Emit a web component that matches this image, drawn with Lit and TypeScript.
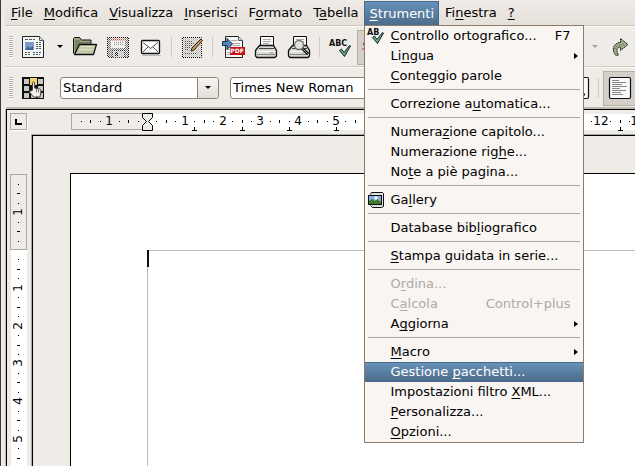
import { LitElement, html, svg, css, nothing, TemplateResult } from "lit";
import { customElement, property, state } from "lit/decorators.js";
import { classMap } from "lit/directives/class-map.js";

/* Icons, all on a 24 x 24 grid */
const page = (fill = "#f4f5f3") => svg`
  <path d="M1.500 1.500h17l4 4v17h-21z" fill="${fill}" stroke="#222"/>
  <path d="M18.500 1.500v4h4" fill="#ddd" stroke="#555"/>`;

const printer = svg`
  <path d="M6.500 11.500V1.500h13v10" fill="#fafafa" stroke="#111"/>
  <path d="M9 4.500h8M9 6.500h8M9 8.500h6" stroke="#aaa"/>
  <path d="M5.500 10.500h14l3 5v5.500l-1.500 1.500H3L1.500 21v-5.500z" fill="#d8d8d4" stroke="#111" stroke-width="1.300"/>
  <path d="M5 13.500h15" stroke="#444"/>
  <path d="M3 16.500h18" stroke="#fff"/>
  <path d="M3 19.500h18" stroke="#888"/>
  <rect x="16" y="17" width="3" height="1" fill="#6a8"/>`;

const check = (x: number, y: number) => svg`
  <path transform="translate(${x} ${y})" d="M.5 5.500l2-1.500 2.500 3.500L10.500.5l1 .5L5.500 11.500z" fill="#6fae76" stroke="#123" stroke-linejoin="round"/>`;

const icons: Record<string, TemplateResult> = {
  newdoc: svg`${page("#f3f6f8")}
    <path d="M4 4.500h10" stroke="#555" stroke-dasharray="3 1"/>
    <rect x="4" y="7" width="9" height="8" fill="#7d9ac4"/><path d="M4 15l3-4 2 2 3-2v4z" fill="#42659b"/>
    <path d="M15 7.500h5M15 9.500h5M15 11.500h5M15 13.500h5M4 17.500h6M12 17.500h8M4 19.500h6M12 19.500h7" stroke="#555" stroke-dasharray="2 1"/>`,
  open: svg`<g transform="translate(-2 -1)">
    <path d="M2.500 19.500v-15l1-1h5l2 2.500h9.500v5" fill="#9aa382" stroke="#111"/>
    <path d="M4 18V6h4l2 2h9v3" fill="#79815f"/>
    <path d="M3.500 20.500l5-10H25.500l-3 10z" fill="#c3caa8" stroke="#111" stroke-width="1.300" stroke-linejoin="round"/>
    <path d="M9.500 12.500h14M8 15.500h14" stroke="#dfe4cb"/></g>`,
  save: svg`
    <path d="M1.500 2.500h21v20h-19l-2-2z" fill="#6f7478" stroke="#000"/>
    <rect x="5" y="3" width="14" height="10" fill="#f6f6f6"/><path d="M5 4.500h14" stroke="#c8503f" stroke-width="2"/>
    <path d="M7 7.500h10M7 9.500h10" stroke="#999"/>
    <rect x="6.500" y="15.500" width="12" height="7" fill="#b9bec0" stroke="#333"/><rect x="9" y="17" width="3" height="4" fill="#111"/>
    <rect x="1" y="2" width="22" height="21" fill="url(#dither)"/>`,
  mail: svg`
    <rect x="2.500" y="5.500" width="18" height="13" rx="1" fill="#fafafa" stroke="#111" stroke-width="1.300"/>
    <path d="M4 7.500l7.500 6 7.500-6M4 17l5-5M19 17l-5-5" fill="none" stroke="#555"/><path d="M3 20.500h19" stroke="#bbb"/>`,
  edit: svg`
    <path d="M2.500 2.500h19v20h-19z" fill="#bdbdb9" stroke="#000"/>
    <path d="M5 6.500h8M5 8.500h9M5 10.500h7M5 12.500h6M5 14.500h4M5 18.500h12" stroke="#444"/>
    <rect x="2" y="2" width="20" height="21" fill="url(#dither)"/>
    <path d="M11 16l1-3 9-9 1.500 1.500L14 15z" fill="#d09a55" stroke="#222"/>`,
  pdf: svg`
    <path d="M4.500 1.500h13l4 4v17h-17z" fill="#f6f6f6" stroke="#222"/><path d="M17.500 1.500v4h4" fill="#ddd" stroke="#555"/>
    <path d="M10 5.500h6M12 8.500h7M12 10.500h7M6 14.500h3M6 17.500h3M6 19.500h3" stroke="#aaa"/>
    <path d="M1.500 6.500H6V3.500L11.500 9 6 14.500v-4H1.500z" fill="#5486b5" stroke="#10304c"/>
    <rect x="9" y="12" width="15" height="8" fill="#c2141a"/>
    <text x="16" y="18" class="pdf">PDF</text>`,
  print: svg`${printer}`,
  preview: svg`${printer}
    <path d="M15 13l6 6" stroke="#111" stroke-width="3"/><path d="M15 13l5.500 5.500" stroke="#9aa58a"/>
    <circle cx="12" cy="10" r="4.500" fill="#dfe3df" stroke="#777" stroke-width="1.500"/>`,
  spell: svg`<text x="1" y="11" class="abc">ABC</text>${check(11, 10)}`,
  autospell: svg`<text x="1" y="10" class="abc">ABC</text>
    <path d="M0 14.500l2-1 2 1 2-1 2 1 2-1 2 1 2-1 2 1 2-1" fill="none" stroke="#e02010"/>`,
  redo: svg`
    <path d="M8 20.500C3 15 5.500 7.500 12.500 7.500V3.500L20 9.500l-7.500 6V12C9 12 7.500 15 10.500 20z" fill="#a0ab87" stroke="#111" stroke-dasharray="1.500 .7"/>
    <path d="M7 14c1-3 3-4 6-4.500h3" fill="none" stroke="#66734d" stroke-dasharray="1 1"/>`,
  styles: svg`
    <rect x="1" y="1" width="22" height="22" fill="#111"/>
    <path d="M3 3h5v5H3zM17 3h5v5h-5zM3 10h5v5H3zM17 10h5v5h-5zM3 17h5v5H3zM10 17h5v5h-5zM17 17h5v5h-5z" fill="#c9c9c4"/>
    <rect x="9" y="2" width="7" height="7" fill="#f3d36c"/>
    <path d="M11.500 14V6.500q1-1.500 2 0V12l5 1q1.500.5 1.500 2l-1 6h-6.500l-4-5q0-2 2-1z" fill="#f1eee4" stroke="#444"/>
    <path d="M15.500 13v3M17.500 13.500v3" stroke="#777"/>`,
  alignleft: svg`
    <rect x="1.500" y="1.500" width="21" height="21" rx="1.500" fill="#fafafa" stroke="#111" stroke-width="1.200"/>
    <path d="M4 4.500h7M4 6.500h14M4 8.500h10M4 10.500h15M4 12.500h8M4 14.500h14M4 16.500h9M4 18.500h11" stroke="#888"/>`,
  frame: svg`
    <rect x="1.500" y="1.500" width="21" height="21" rx="1.500" fill="#fafafa" stroke="#111" stroke-width="1.200"/><path d="M14 18.500h5" stroke="#111" stroke-width="2"/>`,
  gallery: svg`
    <path d="M5.500 6.500l1-2h11l1 1v13l-2 1h-9l-2-2" fill="#ddd" stroke="#111"/>
    <rect x="3.500" y="7.500" width="13" height="9" fill="#86aede" stroke="#111"/>
    <path d="M4 13l3-2 3 2 2-2 4 3v2H4z" fill="#3f7a2d"/><path d="M11 8l2 2-2 2-2-2z" fill="#fff"/>`,
  spellmenu: svg`<text x="2" y="11" class="abc">AB</text>${check(7, 8)}`,
};

const icon = (name: string) => html`<svg class="icon" viewBox="0 0 24 24" aria-hidden="true">
  <defs><pattern id="dither" width="2" height="2" patternUnits="userSpaceOnUse">
    <rect width="1" height="1" fill="#efebe7"/><rect x="1" y="1" width="1" height="1" fill="#efebe7"/>
  </pattern></defs>${icons[name]}</svg>`;

/* "_" marks the mnemonic: the letter after it is underlined */
const mnemonic = (s: string) => {
  const i = s.indexOf("_");
  return i < 0 ? html`${s}` : html`${s.slice(0, i)}<u>${s[i + 1]}</u>${s.slice(i + 2)}`;
};

const shared = css`
  * { box-sizing: border-box; }
  button, select { font: inherit; color: inherit; border: 0; margin: 0; padding: 0; background: none; }
  u { text-decoration-thickness: 1px; text-underline-offset: 2px; text-decoration-skip-ink: none; }
  .icon { display: block; width: 24px; height: 24px; flex: none; }
  .abc { font: bold 8px "DejaVu Sans", sans-serif; fill: #111; }
  .pdf { font: bold 6px "DejaVu Sans", sans-serif; fill: #fff; text-anchor: middle; }
`;

type Entry = { label: string; key?: string; icon?: string; sub?: boolean; disabled?: boolean; active?: boolean } | null;

const tools: Entry[] = [
  { label: "_Controllo ortografico...", key: "F7", icon: "spellmenu" },
  { label: "Li_ngua", sub: true },
  { label: "_Conteggio parole" },
  null,
  { label: "Correzione a_utomatica..." },
  null,
  { label: "Numera_zione capitolo..." },
  { label: "Numerazione rig_he..." },
  { label: "No_te a piè pagina..." },
  null,
  { label: "Ga_llery", icon: "gallery" },
  null,
  { label: "Database bib_liografico" },
  null,
  { label: "_Stampa guidata in serie..." },
  null,
  { label: "O_rdina...", disabled: true },
  { label: "C_alcola", key: "Control+plus", disabled: true },
  { label: "A_ggiorna", sub: true },
  null,
  { label: "_Macro", sub: true },
  { label: "Gestione _pacchetti...", active: true },
  { label: "Impostazioni filtro _XML..." },
  { label: "_Personalizza..." },
  { label: "_Opzioni..." },
];

@customElement("drop-menu")
export class DropMenu extends LitElement {
  @property({ attribute: false }) entries: Entry[] = [];
  static styles = [shared, css`
    :host { display: block; width: 220px; background: #f8f5f2; border: 1px solid #8f7b6b; color: #000; }
    .entry { display: flex; align-items: center; width: 100%; height: 20px; padding-right: 12px; text-align: left; white-space: nowrap; }
    .slot { width: 26px; flex: none; }
    .label { flex: 1; }
    .entry:disabled { color: #aeaaa6; }
    .active { color: #fff; background: linear-gradient(#6791b8, #4c6c8c); border: 1px solid #456a90; border-width: 1px 0; }
    .rule { height: 8px; margin: 0 3px; border: 0; background: linear-gradient(#aaa6a2, #aaa6a2) 0 3px / 100% 1px no-repeat; }
    .arrow { width: 4px; height: 6px; margin-right: -7px; }
  `];
  render() {
    return this.entries.map((e) => e === null ? html`<hr class="rule">` : html`
      <button role="menuitem" class=${classMap({ entry: true, active: !!e.active })} ?disabled=${e.disabled}>
        <span class="slot">${e.icon ? icon(e.icon) : nothing}</span>
        <span class="label">${mnemonic(e.label)}</span>
        ${e.key ? html`<span>${e.key}</span>` : nothing}
        ${e.sub ? html`<svg class="arrow" viewBox="0 0 4 6" aria-hidden="true"><path d="M0 0l4 3-4 3z"/></svg>` : nothing}
      </button>`);
  }
}

const CM = 37.8;
const ORIGIN = 116;

@customElement("ruler-strip")
export class RulerStrip extends LitElement {
  @property({ type: Boolean, reflect: true }) vertical = false;
  @state() private extent = 0;
  private observer = new ResizeObserver(([e]) => {
    this.extent = this.vertical ? e.contentRect.height : e.contentRect.width;
  });
  static styles = css`
    :host { display: block; overflow: hidden; min-width: 0; min-height: 0; }
    svg { display: block; width: 100%; height: 24px; }
    :host([vertical]) svg { width: 24px; height: 100%; }
    text { font: 12px "DejaVu Sans", sans-serif; text-anchor: middle; fill: #000; }
  `;
  connectedCallback() {
    super.connectedCallback();
    this.observer.observe(this);
  }
  disconnectedCallback() {
    super.disconnectedCallback();
    this.observer.disconnect();
  }
  render() {
    const v = this.vertical;
    const end = this.extent + 6;
    const white = Math.max(0, this.extent - ORIGIN);
    const marks: unknown[] = [];
    const box = (a: number, h: number) => v
      ? svg`<rect x=${11 - Math.floor(h / 2)} y=${a} width=${h} height="1"/>`
      : svg`<rect x=${a} y=${11 - Math.floor(h / 2)} width="1" height=${h}/>`;
    for (let q = -7; ORIGIN + (q * CM) / 4 < end; q++) {
      if (q === 0) continue;
      const p = Math.round(ORIGIN + (q * CM) / 4);
      if (q % 4 === 0) {
        const n = Math.abs(q / 4);
        marks.push(v
          ? svg`<text transform="translate(15 ${p}) rotate(-90)">${n}</text>`
          : svg`<text x=${p} y="15">${n}</text>`);
      } else marks.push(box(p, q % 2 === 0 ? 3 : 1));
    }
    if (v) return html`<svg aria-label="Righello verticale">
      <rect x="3.5" y="40.5" width="16" height="75" fill="#efebe7" stroke="#aaa9a2"/>
      <rect x="4" y="116" width="16" height=${white} fill="#fff"/>${marks}</svg>`;
    const tabs: number[] = [];
    for (let t = 1; ORIGIN + t * CM * 1.25 < end; t++) tabs.push(Math.round(ORIGIN + t * CM * 1.25));
    return html`<svg aria-label="Righello orizzontale">
      <rect x="40.5" y="3.5" width="75" height="16" fill="#efebe7" stroke="#aaa9a2"/>
      <rect x="116" y="4" width=${white} height="16" fill="#fff"/>
      ${marks}
      ${tabs.map((t) => svg`<path d="M${t - 2} 20.500h5M${t + 0.5} 17v3" stroke="#000"/>`)}
      <path d="M111.500 3.500h10v4l-4 4 4 4v5h-10v-5l4-4-4-4z" fill="#efebe7" stroke="#000"/></svg>`;
  }
}

const menus = ["_File", "_Modifica", "_Visualizza", "_Inserisci", "F_ormato", "T_abella", "_Strumenti", "Fi_nestra", "_?"];

@customElement("app-root")
export class AppRoot extends LitElement {
  static styles = [shared, css`
    :host { display: flex; flex-direction: column; min-height: 100vh; position: relative; overflow: hidden;
      padding-left: 4px; border-left: 1px solid #40373a; background: #efebe7;
      font: 13px/18px "DejaVu Sans", sans-serif; color: #000; }
    .menubar { display: flex; height: 26px; padding-top: 1px; border-bottom: 1px solid #cfc4ba; background: linear-gradient(#efebe7, #e6e0da); }
    .item { position: relative; }
    .title { height: 24px; padding: 0 5px 0 6px; white-space: nowrap; }
    .open { color: #fff; background: linear-gradient(#6791b8, #4c6c8c); border: 1px solid #456a90; border-width: 1px 1px 0; padding: 0 4px 0 5px; }
    drop-menu { position: absolute; left: 0; top: 24px; z-index: 2; }
    .toolbar { display: flex; align-items: center; gap: 9px; height: 41px; padding: 0 3px 0 4px; border-top: 1px solid #fbf9f7; border-bottom: 1px solid #d3c8be; }
    .format { height: 40px; border-bottom: 0; }
    .grip { width: 4px; height: 22px; margin-right: -1px; background: repeating-linear-gradient(#b9b0a8 0 1px, #fff 1px 2px); }
    .sep { width: 1px; height: 20px; margin: 0 -1px; background: #d2cac2; flex: none; }
    .tool { flex: none; }
    .more { width: 14px; height: 24px; display: grid; place-items: center; margin: 0 -3px 0 -1px; flex: none; }
    .tri { width: 6px; height: 3px; display: block; }
    .off { fill: #a5a19d; }
    .pressed { height: 35px; padding: 4px; margin: 0 -5px -1px -4px; background: #d5cfc9; border: 1px solid #b9aca0; }
    .push { margin-left: auto; }
    .combo { display: grid; grid-template-columns: 1fr 21px; width: 159px; height: 22px; margin-left: 6px; flex: none;
      background: #fff; border: 1px solid #8f8173; border-radius: 3px; overflow: hidden; }
    .combo select { grid-area: 1 / 1 / 2 / 3; appearance: none; padding: 0 24px 0 2px; min-width: 0; }
    .drop { grid-area: 1 / 2; display: grid; place-items: center; border-left: 1px solid #8f8173; background: linear-gradient(#f6f3f0, #e4ded8); pointer-events: none; }
    .font { margin-left: 2px; width: 170px; }
    .work { flex: 1; display: grid; grid-template: 24px 1fr / 24px 1fr; border-left: 1px solid #000; border-top: 1px solid #000;
      box-shadow: 0 -2px #bcb8ae, -1px 0 #bcb8ae; margin: 2px 0 0 1px; min-height: 357px; }
    .corner { padding: 3px; }
    .tab { display: block; width: 17px; height: 17px; border: 1px solid #aaa9a2; box-shadow: 1px 1px #fff; }
    .tab svg { display: block; width: 15px; height: 15px; }
    .canvas { display: flex; border: 1px solid #aaa9a2; border-width: 1px 0 0 1px; min-width: 0; }
    .inner { flex: 1; display: flex; border: 1px solid #000; border-width: 1px 0 0 1px; padding: 37px 0 0 37px; min-width: 0; }
    .page { flex: 1; display: flex; background: #fff; border: 1px solid #000; border-width: 1px 0 0 1px; padding: 76px 0 0 76px; }
    .text { flex: 1; border: 1px solid #bbb; border-width: 1px 0 0 1px; }
    .caret { width: 2px; height: 17px; margin: -1px 0 0 -1px; background: #111; }
  `];

  private tool(name: string, label: string, cls = "") {
    return html`<button class="tool ${cls}" aria-label=${label}>${icon(name)}</button>`;
  }
  private tri(off = false) {
    return html`<svg class=${classMap({ tri: true, off })} viewBox="0 0 6 3" aria-hidden="true"><path d="M0 0h6L3 3z"/></svg>`;
  }

  render() {
    const sep = html`<span class="sep"></span>`;
    return html`
      <nav class="menubar">
        ${menus.map((m) => {
          const open = m === "_Strumenti";
          return html`<div class="item">
            <button class=${classMap({ title: true, open })}>${mnemonic(m)}</button>
            ${open ? html`<drop-menu role="menu" .entries=${tools}></drop-menu>` : nothing}
          </div>`;
        })}
      </nav>
      <div class="toolbar">
        <span class="grip"></span>
        ${this.tool("newdoc", "Nuovo")}
        <button class="more" aria-label="Altri tipi">${this.tri()}</button>
        ${this.tool("open", "Apri")}${this.tool("save", "Salva")}${this.tool("mail", "Invia")}
        ${sep}${this.tool("edit", "Modifica file")}${sep}
        ${this.tool("pdf", "Esporta PDF")}${this.tool("print", "Stampa")}${this.tool("preview", "Anteprima")}
        ${sep}${this.tool("spell", "Controllo ortografico")}
        ${this.tool("autospell", "Controllo automatico", "pressed")}
        <button class="more push" aria-label="Azioni da annullare">${this.tri(true)}</button>
        ${this.tool("redo", "Ripristina")}
      </div>
      <div class="toolbar format">
        <span class="grip"></span>
        ${this.tool("styles", "Stili e formattazione")}
        <label class="combo"><select aria-label="Stile"><option>Standard</option></select><span class="drop">${this.tri()}</span></label>
        <label class="combo font"><select aria-label="Carattere"><option>Times New Roman</option></select><span class="drop">${this.tri()}</span></label>
        ${this.tool("frame", "Sottolineato", "push")}
        ${sep}
        ${this.tool("alignleft", "Allinea a sinistra", "pressed")}
      </div>
      <main class="work">
        <div class="corner"><button class="tab" aria-label="Tabulazione">
          <svg viewBox="0 0 15 15"><path d="M5 5v5h6" fill="none" stroke="#000" stroke-width="2"/></svg></button></div>
        <ruler-strip></ruler-strip>
        <ruler-strip vertical></ruler-strip>
        <div class="canvas"><div class="inner"><div class="page"><div class="text"><div class="caret"></div></div></div></div></div>
      </main>`;
  }
}
